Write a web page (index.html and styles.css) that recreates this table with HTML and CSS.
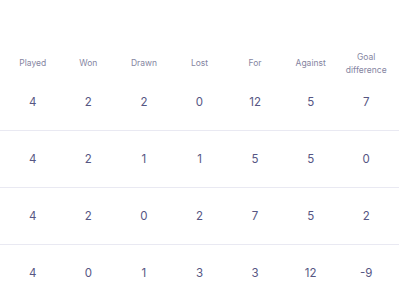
FILE: index.html
```html
<!DOCTYPE html>
<html>
<head>
<meta charset="utf-8">
<link rel="stylesheet" href="styles.css">
</head>
<body>
<div class="table">
  <div class="row head">
    <div>Played</div><div>Won</div><div>Drawn</div><div>Lost</div><div>For</div><div>Against</div><div>Goal<br>difference</div>
  </div>
  <div class="row data">
    <div>4</div><div>2</div><div>2</div><div>0</div><div>12</div><div>5</div><div>7</div>
  </div>
  <div class="row data">
    <div>4</div><div>2</div><div>1</div><div>1</div><div>5</div><div>5</div><div>0</div>
  </div>
  <div class="row data">
    <div>4</div><div>2</div><div>0</div><div>2</div><div>7</div><div>5</div><div>2</div>
  </div>
  <div class="row data">
    <div>4</div><div>0</div><div>1</div><div>3</div><div>3</div><div>12</div><div>-9</div>
  </div>
</div>
</body>
</html>
```

FILE: styles.css
```css
html, body {
  margin: 0;
  padding: 0;
  background: #ffffff;
}
body {
  font-family: Inter, "Noto Sans", sans-serif;
  overflow: hidden;
}
.table {
  padding-top: 51px;
}
.row {
  display: grid;
  grid-template-columns: repeat(7, 1fr);
  padding: 0 5px;
  align-items: center;
  text-align: center;
}
.head {
  height: 23px;
  font-size: 8.5px;
  line-height: 12.5px;
  color: #85859f;
}
.data {
  height: 56px;
  font-size: 11.5px;
  color: #565683;
  border-bottom: 1px solid #e9e9f2;
}
```
